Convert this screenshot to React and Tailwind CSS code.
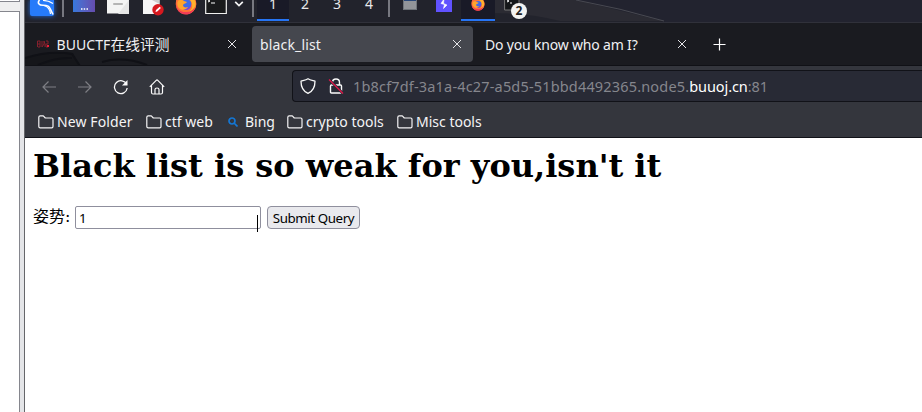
import React from "react";

const Close = () => (
  <svg className="h-3 w-3 shrink-0" viewBox="0 0 12 12" fill="none" stroke="#e4e4e7" strokeWidth="1">
    <path d="M2 2l8 8M10 2l-8 8" />
  </svg>
);

const FirefoxIcon = ({ className }) => (
  <svg className={className} viewBox="0 0 22 22">
    <circle cx="11" cy="11" r="10.3" fill="#ff5a35" />
    <path d="M1 9C1 4 5 2 6 1l1 3c4-1 7 0 9 2l-1-5c4 3 7 7 6 12-1 5-5 8-10 8S1 17 1 9z" fill="#ff7139" />
    <path d="M14 1c5 3 8 8 6 13-2 5-6 6-9 6 5-2 7-5 6-9 0-3-3-4-4-6l1-4z" fill="#ffb32b" />
    <circle cx="11.5" cy="11" r="4.800" fill="#3d6be8" />
    <path d="M8 13c3 3 6 2 8-1-.2 3-2 5-5 5s-4-2-3-4z" fill="#7547dc" />
    <path d="M3 8c2-2 5-1 6 0l3 1c-1 2-3 1-4 3 0 2 2 3 5 2-2 3-6 4-9 1-2-2-2-5-1-7z" fill="#ffa52c" />
    <path d="M1 11c1 6 5 8 9 8 5 0 8-2 10-5-1 5-5 7.500-9 7.500C5 21.500 1 17 1 11z" fill="#f23d55" />
  </svg>
);

const Folder = () => (
  <svg className="h-[14px] w-4 shrink-0" viewBox="0 0 16 14" fill="none" stroke="#f4f4f5" strokeWidth="1.2">
    <path d="M.8 11.500V2.300Q.8.900 2.200.900H5.300L7.300 3H13.700Q15 3 15 4.300V11.500Q15 12.900 13.700 12.900H2.200Q.8 12.900.8 11.500z" strokeLinejoin="round" />
  </svg>
);

function Taskbar() {
  return (
    <div className="relative flex h-[22px] items-start overflow-hidden bg-[#22232f]">
      <svg className="absolute left-0 top-0 h-[22px] w-[897px]" viewBox="25 0 897 22">
        <path d="M25 0H575L665 22H25z" fill="#22232c" />
        <path d="M490 0H576L663 21H560Q530 13 490 13z" fill="#2b2b33" />
        <path d="M576 0Q620 8 664 21" fill="none" stroke="#484951" />
      </svg>
      <div className="relative ml-[5px] h-4 w-6 rounded-b-[2px] bg-[#267bfa] shadow-[0_0_5px_#236ee0]">
        <svg className="h-4 w-6" viewBox="0 0 24 16" fill="none" stroke="#fff">
          <path d="M9.500 0C7 3 9 5.300 13 5.300c5 0 6 1 7.500 4l2.500 5.200" strokeWidth="1.600" />
          <path d="M14 5.500c4 1 6 4 6.500 8.500" strokeWidth="1.200" />
          <path d="M13 .5c4 0 7 1 10 3" strokeWidth="1.200" />
        </svg>
      </div>
      <div className="relative ml-2 h-[17px] w-[2px] bg-[#777880]" />
      <div className="relative ml-[9px] flex h-3 w-[22px] items-end justify-center bg-linear-to-r from-[#3479dc] to-[#644cae] pb-[2px]">
        <svg className="h-[2px] w-[7px]" viewBox="0 0 7 2"><path d="M0 1h1.500M2.700 1h1.500M5.500 1H7" stroke="white" strokeWidth="1.500" /></svg>
      </div>
      <svg className="relative ml-3 h-[14px] w-[22px]" viewBox="0 0 22 14">
        <path d="M0 0H22V13.500H0z" fill="#f4f4f4" /><path d="M22 0V14H11z" fill="#e6e6e6" />
        <path d="M7 4h8" stroke="#b5b5b5" strokeWidth="2" strokeLinecap="round" />
      </svg>
      <svg className="relative ml-[14px] h-[17px] w-[21px]" viewBox="0 0 21 17">
        <path d="M0 0H16.500V14H0z" fill="#f6f6f6" />
        <path d="M9 0H16.500V4z" fill="#ccc" />
        <circle cx="15" cy="9.700" r="5.700" fill="#d7191f" />
        <path d="M12.500 12l.5-2 3.700-3.200 1.200 1.200L14.200 11.400z" fill="white" />
      </svg>
      <div className="relative ml-[11px] h-[15px] w-[22px] overflow-hidden">
        <FirefoxIcon className="-mt-[7px] h-[22px] w-[22px]" />
      </div>
      <svg className="relative ml-2 h-[15px] w-[22px]" viewBox="0 0 22 15">
        <path d="M.7-2V13.500H21.300V-2" fill="#191a1c" stroke="#f0f0f0" strokeWidth="1.200" />
        <path d="M3 0l2 1-2 1M6 3h4" fill="none" stroke="white" />
      </svg>
      <svg className="relative ml-[7px] h-2 w-[10px]" viewBox="0 0 10 8" fill="none" stroke="#f4f4f5" strokeWidth="1.700">
        <path d="M1.200 1.800L5 5.600 8.800 1.800" />
      </svg>
      <div className="relative ml-2 h-[17px] w-[2px] bg-[#777880]" />
      <div className="relative ml-[3px] flex text-[14px] leading-[10px] text-[#e8e8ea]">
        <div className="h-[21px] w-8 border-b-2 border-[#2675f5] bg-[#191a27] text-center"><span className="-mt-px block">1</span></div>
        {[2, 3, 4].map((n) => (
          <div key={n} className="h-[21px] w-8 text-center"><span className="-mt-px block">{n}</span></div>
        ))}
      </div>
      <div className="relative ml-[3px] h-[17px] w-[2px] bg-[#777880]" />
      <div className="relative ml-[13px] h-[10px] w-[14px] border-x border-b border-[#6f747a] bg-[#929499]">
        <div className="h-px bg-[#284779]" />
      </div>
      <svg className="relative ml-[19px] h-3 w-4" viewBox="0 0 16 12">
        <path d="M0 0H16V12H0z" fill="#6152ff" />
        <path d="M8-1L5 3.500 8.500 4.500 7.500 8.500 11 5 7.500 3.500z" fill="white" stroke="white" strokeWidth=".6" />
      </svg>
      <div className="relative ml-[9px] flex h-[21px] w-[34px] justify-center border-b-2 border-[#2675f5] bg-[#191a27]">
        <div className="h-[11px] w-[14px] overflow-hidden"><FirefoxIcon className="-mt-[3px] h-[14px] w-[14px]" /></div>
      </div>
      <div className="relative ml-[9px] h-[22px] w-6">
        <svg className="h-3 w-4" viewBox="0 0 16 12"><path d="M.6-1V10H15V-1" fill="#151719" stroke="#777" /><path d="M3 0l2 1-2 1M6 3h2" fill="none" stroke="white" /></svg>
        <span className="absolute left-[7px] top-[3px] flex h-4 w-4 items-center justify-center rounded-full bg-[#f3f3f1] text-[12px] font-bold leading-none text-[#222]">2</span>
      </div>
    </div>
  );
}

function Tabs() {
  return (
    <div className="relative flex h-11 items-center border-b border-t border-b-[#101116] border-t-[#30313a] bg-[#1a1b20] text-[14px] text-[#f0f0f2]">
      <svg className="absolute left-0 top-0 h-[42px] w-[225px]" viewBox="0 0 225 42" fill="none">
        <path d="M0 35Q28 27 48 30L54 42H0z" fill="#15161a" />
        <path d="M0 35Q25 27 47 31L55 43M13 42Q31 34 47 35M77 39Q98 33 122 42" stroke="#101116" strokeWidth="2" />
      </svg>
      <div className="relative flex h-9 w-[227px] items-center">
        <svg className="ml-3 h-2 w-3" viewBox="0 0 12 8" fill="none" stroke="#86202d">
          <path d="M.5 7V1H3v3H1M3 4v3H1M5 1v6l2-3V1l1 3v3M9 1h2v3H9v3h2" /><path d="M10 5h2v2h-2z" fill="#ee1e36" stroke="none" />
        </svg>
        <span className="ml-[7.500px] whitespace-nowrap tracking-[.08px]">BUUCTF<span className="text-[14.700px]">在线评测</span></span>
        <div className="ml-auto mr-[14px] flex"><Close /></div>
      </div>
      <div className="relative flex h-9 w-[221px] items-center rounded bg-[#45474e] pl-2 pr-[10px]">
        <span className="tracking-[.16px]">black_list</span><div className="ml-auto flex"><Close /></div>
      </div>
      <div className="flex h-9 w-[215px] items-center pl-3">
        <span className="whitespace-nowrap tracking-[-.18px]">Do you know who am I?</span><div className="ml-auto flex"><Close /></div>
      </div>
      <svg className="ml-[25px] h-[13px] w-[13px]" viewBox="0 0 13 13" stroke="white" strokeWidth="1.200"><path d="M.5 6.500h12M6.500.5v12" /></svg>
    </div>
  );
}

function Navigation() {
  return (
    <div className="flex h-10 items-center bg-[#34363d]">
      <svg className="ml-[17px] mt-px h-[14px] w-[14px]" viewBox="0 0 14 14" fill="none" stroke="#7e7f85" strokeWidth="1.200"><path d="M14 7H1M6.500 1.500L1 7l5.500 5.500" /></svg>
      <svg className="ml-[22px] mt-px h-[14px] w-[14px]" viewBox="0 0 14 14" fill="none" stroke="#7e7f85" strokeWidth="1.200"><path d="M0 7h13M7.500 1.500L13 7l-5.500 5.500" /></svg>
      <svg className="ml-[21px] mt-px h-4 w-4" viewBox="0 0 16 16" fill="none" stroke="#fafafa" strokeWidth="1.300"><path d="M13.700 5.500A6.400 6.400 0 1 0 14.200 9" /><path d="M14.500 1v5.500H9z" fill="#fafafa" stroke="none" /></svg>
      <svg className="ml-5 mt-px h-4 w-4" viewBox="0 0 16 16" fill="none" stroke="#fafafa" strokeWidth="1.200"><path d="M.8 7.800L7.200 1.400Q8 .6 8.800 1.400L15.200 7.800M2.500 6.500V13.500Q2.500 15 4 15H12Q13.500 15 13.500 13.500V6.500M6 15V10.500Q6 9 8 9T10 10.500V15" /></svg>
      <div className="ml-[127px] flex h-8 flex-1 items-center rounded-l border-y border-l border-[#111218] bg-[#282a35] pl-[7px]">
        <svg className="h-4 w-4" viewBox="0 0 16 16" fill="none" stroke="#fafafa" strokeWidth="1.300"><path d="M8 .8C6 2.300 3.500 2.500 1 3.200 1 8 2.500 13 8 15.300 13.500 13 15 8 15 3.200 12.500 2.500 10 2.300 8 .8z" strokeLinejoin="round" /></svg>
        <svg className="ml-3 h-4 w-4" viewBox="0 0 16 16" fill="none" stroke="#fafafa" strokeWidth="1.400"><path d="M4.500 7V4.500Q4.500 1 8 1T11.500 4.500V7M3.500 7H12.500Q13.500 7 13.500 8V14Q13.500 15 12.500 15H3.500Q2.500 15 2.500 14V8Q2.500 7 3.500 7z" /><path d="M1.500 2L15 15.500" stroke="#282a35" strokeWidth="2.500" /><path d="M1 1.500L15 15.500" stroke="#e31749" strokeWidth="1.300" /></svg>
        <span className="ml-[9px] mt-px whitespace-nowrap text-[14.500px] tracking-[.17px] text-[#85868d]">1b8cf7df-3a1a-4c27-a5d5-51bbd4492365.node5.<span className="tracking-[-.1px] text-white">buuoj.cn</span><span className="tracking-[0px]">:81</span></span>
      </div>
    </div>
  );
}

function Bookmarks() {
  return (
    <div className="flex h-8 items-center border-b border-[#111218] bg-[#34363d] pl-[13px] text-[14px] text-[#f4f4f5]">
      <div className="flex w-[108px] items-center gap-[3px]"><Folder /><span className="whitespace-nowrap tracking-[.1px]">New Folder</span></div>
      <div className="flex w-[82px] items-center gap-[3px]"><Folder /><span className="whitespace-nowrap">ctf web</span></div>
      <div className="flex w-[59px] items-center gap-[7px]">
        <svg className="h-[10px] w-[10px]" viewBox="0 0 10 10" fill="none" stroke="#1477d4" strokeWidth="1.700"><circle cx="4" cy="4" r="3" /><path d="M6 6l3.500 3.500" /></svg>
        <span>Bing</span>
      </div>
      <div className="flex w-[110px] items-center gap-[3px]"><Folder /><span className="whitespace-nowrap">crypto tools</span></div>
      <div className="flex items-center gap-[3px]"><Folder /><span>Misc tools</span></div>
    </div>
  );
}

export default function App() {
  return (
    <div className="flex h-[412px] w-[922px] overflow-hidden bg-white font-['Noto_Sans','Noto_Sans_CJK_SC',sans-serif]">
      <aside className="flex w-[25px] shrink-0 border-r border-[#65666a] bg-[#e4e5e8]">
        <div className="flex w-5 flex-col">
          <div className="h-[2px] border-b border-r border-[#85868d] bg-white" />
          <div className="h-[9px] bg-[#efefef]" />
          <div className="flex-1 border-r border-t border-[#85868d] bg-white" />
        </div>
      </aside>
      <main className="w-[897px] shrink-0">
        <Taskbar />
        <Tabs />
        <Navigation />
        <Bookmarks />
        <section className="pl-2 text-black">
          <h1 className="mt-[9px] whitespace-nowrap font-['DejaVu_Serif',serif] text-[32px] font-bold leading-[38px]">Black list is so weak for you,isn't it</h1>
          <form className="mt-[21px] flex h-[23px] items-center">
            <label className="-mt-[2px] w-[42px] whitespace-nowrap font-['DejaVu_Serif','Noto_Sans_CJK_SC',serif] text-[16px] leading-[22px]">姿势:</label>
            <div className="relative h-[23px] w-[186px]">
              <input aria-label="姿势" defaultValue="1" className="block h-[23px] w-[186px] rounded-[2px] border border-[#8f8f9d] bg-white px-[3px] text-[13.333px] outline-none" />
              <span className="absolute left-[182px] top-[9px] h-[17px] w-px bg-black" />
            </div>
            <button type="button" className="ml-[6px] h-[23px] w-[93px] whitespace-nowrap rounded-[4px] border border-[#8f8f9d] bg-[#e9e9ed] text-[13.333px] leading-[20px] tracking-[-.42px]">Submit Query</button>
          </form>
        </section>
      </main>
    </div>
  );
}
